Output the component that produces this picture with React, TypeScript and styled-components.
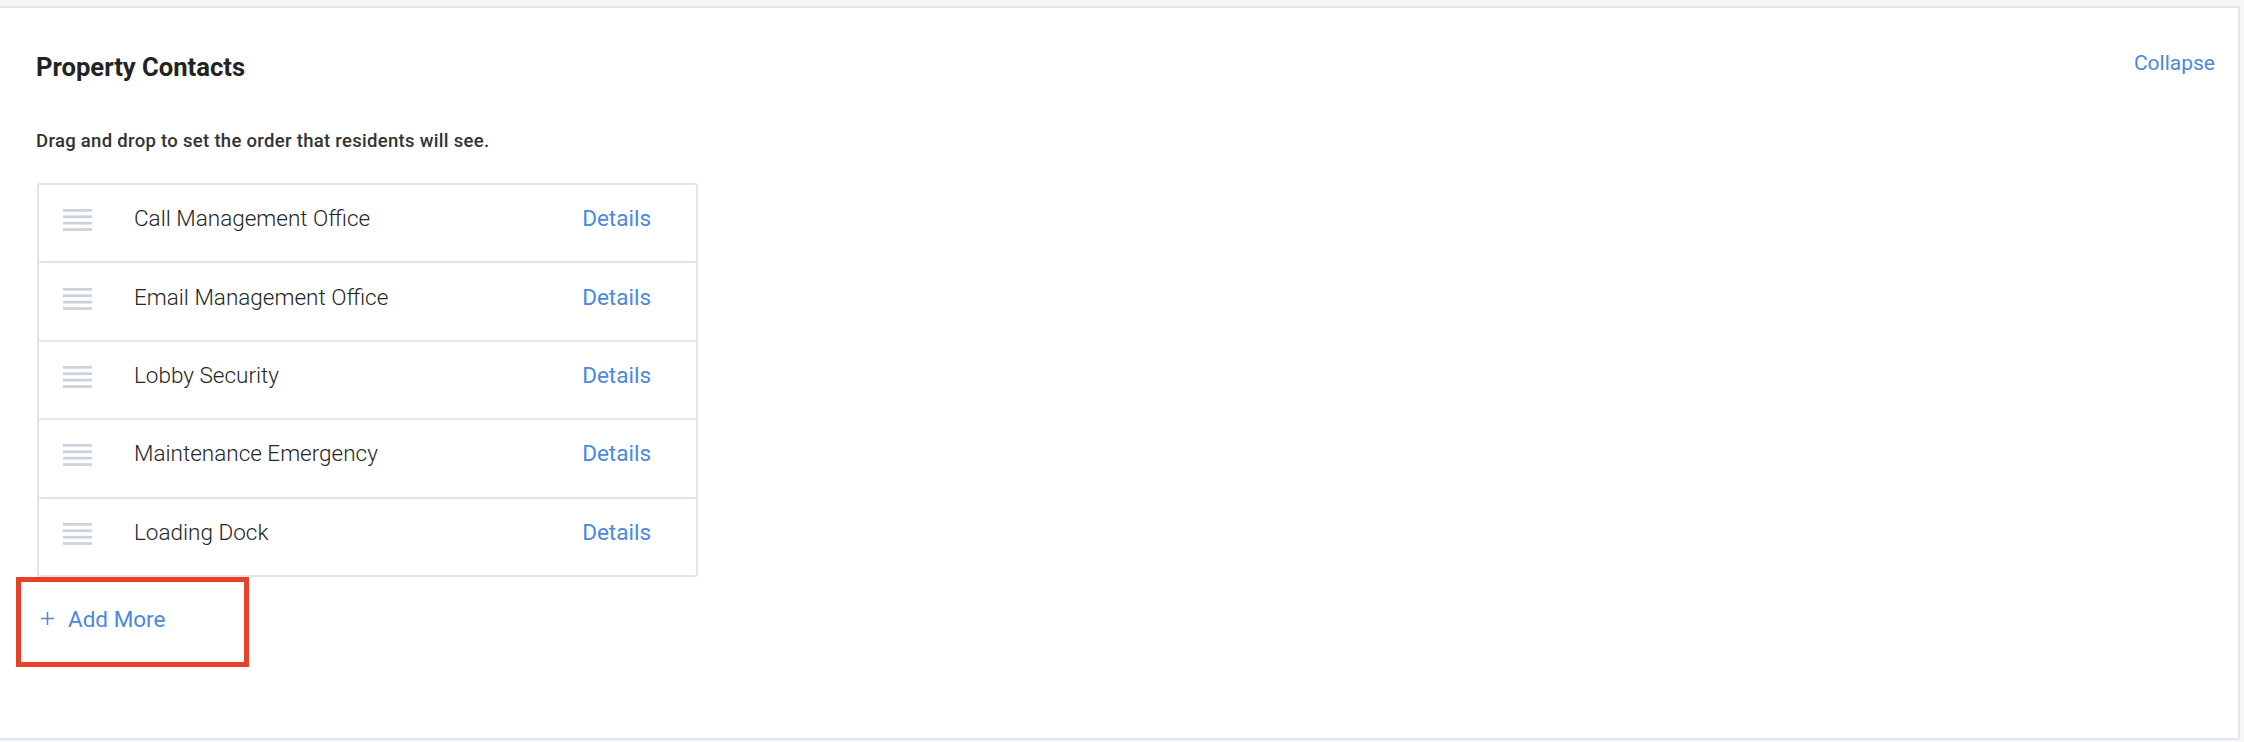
import React from 'react';
import styled, { createGlobalStyle } from 'styled-components';

const GlobalStyle = createGlobalStyle`
  html, body {
    margin: 0;
    padding: 0;
    background: #f5f6f8;
    font-family: Roboto, "Liberation Sans", Arial, sans-serif;
    overflow: hidden;
  }
`;

const Card = styled.section`
  box-sizing: border-box;
  margin: 6px 4px 0 -2px;
  height: 734px;
  background: #ffffff;
  border: 2px solid #e3e6ea;
  border-radius: 3px;
  padding: 43px 23px 0 36px;
`;

const Header = styled.div`
  display: flex;
  justify-content: space-between;
  align-items: flex-start;
`;

const Title = styled.h2`
  margin: 0;
  font-size: 25.6px;
  line-height: 32px;
  font-weight: 700;
  color: #232323;
`;

const LinkButton = styled.button<{ size?: number }>`
  background: none;
  border: none;
  padding: 0;
  cursor: pointer;
  font-family: inherit;
  font-size: ${p => p.size || 22.5}px;
  line-height: 32px;
  font-weight: 400;
  color: #4a89dc;
`;

const CollapseButton = styled(LinkButton)`
  margin-top: -4px;
`;

const Hint = styled.p`
  margin: 46px 0 30px;
  font-size: 18.5px;
  line-height: 24px;
  font-weight: 500;
  letter-spacing: 0.3px;
  color: #333333;
`;

const List = styled.ul`
  list-style: none;
  box-sizing: border-box;
  margin: 0 0 0 1px;
  padding: 0;
  width: 661px;
  border: 2px solid #e2e6eb;
  border-radius: 3px;
`;

const Row = styled.li`
  display: flex;
  align-items: center;
  height: 66.4px;
  padding: 0 45px 10px 24px;
  & + & {
    border-top: 2px solid #e2e6eb;
  }
`;

const Handle = styled.span`
  display: flex;
  width: 29px;
  margin-top: 4px;
  cursor: grab;
`;

const Name = styled.span`
  flex: 1;
  margin-left: 42px;
  font-size: 22.5px;
  font-weight: 300;
  color: #262626;
`;

const Highlight = styled.div`
  box-sizing: border-box;
  width: 233px;
  height: 90px;
  margin: 0 0 0 -20px;
  border: 5px solid #e8412b;
  padding: 23px 0 0 20px;
`;

const AddMore = styled(LinkButton)`
  display: flex;
  align-items: center;
  gap: 14px;
  line-height: 28px;
`;

const contacts = [
  'Call Management Office',
  'Email Management Office',
  'Lobby Security',
  'Maintenance Emergency',
  'Loading Dock',
];

function DragIcon() {
  return (
    <svg width="29" height="22" viewBox="0 0 29 22">
      {[0, 6.4, 12.8, 19.2].map(y => (
        <rect key={y} x="0" y={y} width="29" height="2.7" fill="#c9d3dd" />
      ))}
    </svg>
  );
}

function PlusIcon() {
  return (
    <svg width="13" height="13" viewBox="0 0 13 13">
      <path d="M6.5 0v13M0 6.5h13" stroke="#4a89dc" strokeWidth="1.5" />
    </svg>
  );
}

export default function App() {
  return (
    <>
      <GlobalStyle />
      <Card>
        <Header>
          <Title>Property Contacts</Title>
          <CollapseButton size={21}>Collapse</CollapseButton>
        </Header>
        <Hint>Drag and drop to set the order that residents will see.</Hint>
        <List>
          {contacts.map(name => (
            <Row key={name}>
              <Handle>
                <DragIcon />
              </Handle>
              <Name>{name}</Name>
              <LinkButton>Details</LinkButton>
            </Row>
          ))}
        </List>
        <Highlight>
          <AddMore>
            <PlusIcon />
            Add More
          </AddMore>
        </Highlight>
      </Card>
    </>
  );
}
